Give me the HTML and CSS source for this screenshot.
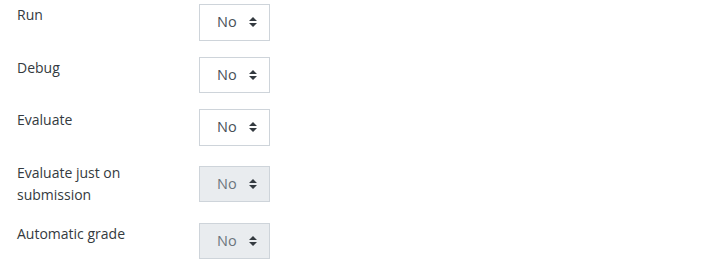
FILE: index.html
```html
<!DOCTYPE html>
<html lang="en">
<head>
<meta charset="utf-8">
<title>Settings</title>
<link rel="stylesheet" href="styles.css">
</head>
<body>
<form class="settings">
  <div class="form-row">
    <label class="form-label" for="run">Run</label>
    <div class="form-control-wrap">
      <select id="run" class="custom-select"><option>No</option><option>Yes</option></select>
    </div>
  </div>
  <div class="form-row">
    <label class="form-label" for="debug">Debug</label>
    <div class="form-control-wrap">
      <select id="debug" class="custom-select"><option>No</option><option>Yes</option></select>
    </div>
  </div>
  <div class="form-row">
    <label class="form-label" for="evaluate">Evaluate</label>
    <div class="form-control-wrap">
      <select id="evaluate" class="custom-select"><option>No</option><option>Yes</option></select>
    </div>
  </div>
  <div class="form-row">
    <label class="form-label" for="evalsub">Evaluate just on submission</label>
    <div class="form-control-wrap">
      <select id="evalsub" class="custom-select" disabled><option>No</option><option>Yes</option></select>
    </div>
  </div>
  <div class="form-row">
    <label class="form-label" for="autograde">Automatic grade</label>
    <div class="form-control-wrap">
      <select id="autograde" class="custom-select" disabled><option>No</option><option>Yes</option></select>
    </div>
  </div>
</form>
</body>
</html>
```

FILE: styles.css
```css
html, body {
  margin: 0;
  padding: 0;
  background: #ffffff;
}

body {
  font-family: "Open Sans", "Noto Sans", sans-serif;
  font-size: 14px;
  line-height: 22.5px;
  color: #343a40;
}

.settings {
  padding: 4px 0 0 17px;
}

.form-row {
  display: flex;
  align-items: flex-start;
  margin-bottom: 16px;
}

.form-label {
  width: 167px;
  margin-right: 15px;
  flex: none;
}

.form-control-wrap {
  align-self: center;
  display: flex;
}

.custom-select {
  -webkit-appearance: none;
  appearance: none;
  box-sizing: border-box;
  width: 71px;
  height: 36.5px;
  margin: 0;
  padding: 6px 28px 6px 17px;
  font-family: inherit;
  font-size: 14.5px;
  line-height: 22.5px;
  color: #495057;
  background-color: #ffffff;
  background-image: url("data:image/svg+xml,%3csvg xmlns='http://www.w3.org/2000/svg' viewBox='0 0 4 5'%3e%3cpath fill='%23343a40' d='M2 0L0 2h4zm0 5L0 3h4z'/%3e%3c/svg%3e");
  background-repeat: no-repeat;
  background-position: right 12px center;
  background-size: 8px 10px;
  border: 1px solid #ced4da;
  border-radius: 0;
}

.custom-select:disabled {
  color: #6c757d;
  background-color: #e9ecef;
  opacity: 1;
}
```
